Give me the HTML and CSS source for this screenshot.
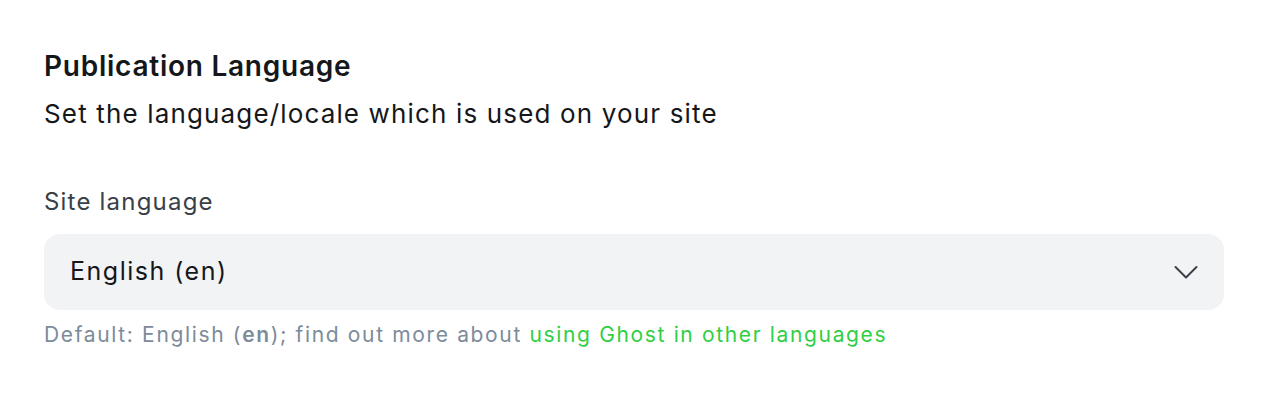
FILE: index.html
```html
<!DOCTYPE html>
<html>
<head>
<meta charset="utf-8">
<link rel="stylesheet" href="styles.css">
</head>
<body>
<section class="panel">
  <h2 class="title">Publication Language</h2>
  <p class="desc">Set the language/locale which is used on your site</p>
  <div class="field">
    <label class="label">Site language</label>
    <div class="select">
      <span class="value">English (en)</span>
      <svg class="chev" width="24" height="15" viewBox="0 0 24 15" fill="none"><path d="M1.5 2 L12 12.5 L22.5 2" stroke="#394047" stroke-width="2" stroke-linecap="round" stroke-linejoin="round"/></svg>
    </div>
    <p class="hint">Default: English (<strong>en</strong>); find out more about <a href="#">using Ghost in other languages</a></p>
  </div>
</section>
</body>
</html>
```
FILE: styles.css
```css
* { box-sizing: border-box; }
html, body { margin: 0; padding: 0; background: #fff; }
body { font-family: Inter, "Noto Sans", sans-serif; color: #15171a; }
.panel { padding: 46px 52px 0 44px; width: 1276px; }
.title { margin: 0; font-size: 28px; font-weight: 600; line-height: 40px; letter-spacing: 0.75px; color: #15171a; }
.desc { margin: 10px 0 0; font-size: 26px; line-height: 36px; color: #15171a; letter-spacing: 1.15px; }
.field { margin-top: 54px; }
.label { display: block; font-size: 24px; line-height: 32px; color: #394047; font-weight: 400; letter-spacing: 1.2px; }
.select { margin-top: 16px; height: 76px; background: #f2f3f5; border-radius: 16px; display: flex; align-items: center; justify-content: space-between; padding: 0 26px 2px 26px; width: 1180px; }
.value { font-size: 25px; color: #15171a; letter-spacing: 1.5px; }
.chev { display: block; margin-top: 2px; }
.hint { margin: 10px 0 0; font-size: 21px; line-height: 30px; color: #7c8b9a; letter-spacing: 1.65px; }
.hint strong { font-weight: 600; color: #7c8b9a; }
.hint a { color: #30cf43; text-decoration: none; }
```
